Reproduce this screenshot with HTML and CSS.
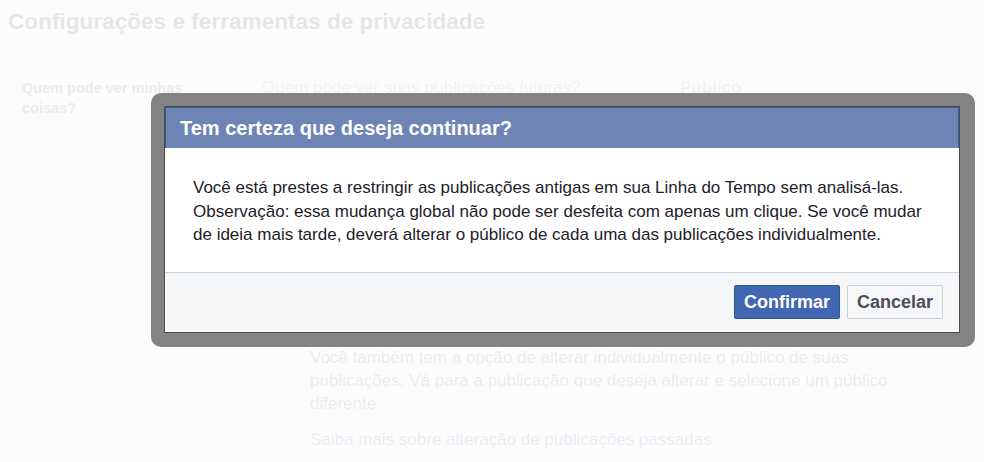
FILE: index.html
```html
<!DOCTYPE html>
<html lang="pt-BR">
<head>
<meta charset="utf-8">
<title>Configurações e ferramentas de privacidade</title>
<link rel="stylesheet" href="styles.css">
</head>
<body>
<div class="page">
  <header class="page-head">
    <h1>Configurações e ferramentas de privacidade</h1>
  </header>
  <section class="settings">
    <div class="side">
      <h2>Quem pode ver minhas coisas?</h2>
    </div>
    <div class="rows">
      <div class="row">
        <div class="q">Quem pode ver suas publicações futuras?</div>
        <div class="val">Público</div>
      </div>
      <div class="row row-open">
        <div class="expanded">
          <p class="note">Você também tem a opção de alterar individualmente o público de suas publicações. Vá para a publicação que deseja alterar e selecione um público diferente.</p>
          <a class="learn" href="#">Saiba mais sobre alteração de publicações passadas</a>
        </div>
      </div>
    </div>
  </section>
</div>

<div class="overlay"></div>

<div class="dialog-frame" role="dialog" aria-labelledby="dlg-title">
  <div class="dialog">
    <div class="dialog-head">
      <h3 id="dlg-title">Tem certeza que deseja continuar?</h3>
    </div>
    <div class="dialog-body">
      Você está prestes a restringir as publicações antigas em sua Linha do Tempo sem analisá-las.<br>
      Observação: essa mudança global não pode ser desfeita com apenas um clique. Se você mudar de ideia mais tarde, deverá alterar o público de cada uma das publicações individualmente.
    </div>
    <div class="dialog-foot">
      <button class="btn btn-primary" type="button">Confirmar</button>
      <button class="btn btn-secondary" type="button">Cancelar</button>
    </div>
  </div>
</div>
</body>
</html>
```

FILE: styles.css
```css
* { box-sizing: border-box; }

html, body {
  margin: 0;
  padding: 0;
}

body {
  background: #ffffff;
  font-family: "Liberation Sans", Arial, Helvetica, sans-serif;
  color: #1d2129;
  overflow: hidden;
}

.page {
  padding-left: 8px;
  min-height: 462px;
}

.page-head {
  height: 63px;
  border-bottom: 1px solid #d3d6db;
}

.page-head h1 {
  margin: 0;
  font-size: 22.6px;
  line-height: 44px;
  font-weight: bold;
  color: #1d2129;
}

.settings {
  display: flex;
  min-height: 399px;
}

.side {
  width: 240px;
  flex: none;
  padding: 15px 14px;
  background: #fcfcfd;
}

.side h2 {
  margin: 0;
  font-size: 14.5px;
  line-height: 20px;
  font-weight: bold;
  color: #4b4f56;
}

.rows {
  flex: 1;
  border-left: 1px solid #eceef1;
}

.row {
  display: flex;
  padding: 15px 0 15px 13px;
  font-size: 17px;
  line-height: 20px;
}

.q {
  width: 418px;
  color: #90949c;
}

.val {
  font-weight: bold;
  color: #90949c;
}

.row-open {
  padding-top: 233px;
  padding-bottom: 0;
}

.expanded {
  padding-left: 48px;
  font-size: 17px;
  line-height: 23px;
  color: #4b4f56;
}

.note {
  margin: 0 0 13px;
  max-width: 600px;
}

.learn {
  color: #365899;
  text-decoration: none;
}

.overlay {
  position: fixed;
  inset: 0;
  background: rgba(252, 252, 252, 0.9);
}

.dialog-frame {
  position: absolute;
  left: 151px;
  top: 93px;
  width: 824px;
  padding: 13px 15px 14px 13px;
  background: #838383;
  border-radius: 10px;
}

.dialog {
  border: 1px solid #4a4a4a;
  background: #ffffff;
}

.dialog-head {
  height: 41px;
  display: flex;
  align-items: center;
  padding: 0 14px;
  background: #6d84b4;
  border: 1px solid #3b5998;
  border-bottom: none;
}

.dialog-head h3 {
  margin: 0;
  color: #ffffff;
  font-size: 20px;
  font-weight: bold;
}

.dialog-body {
  padding: 28px 27px 25px 28px;
  font-size: 17px;
  line-height: 23.5px;
  color: #1d2129;
}

.dialog-foot {
  display: flex;
  justify-content: flex-end;
  gap: 7px;
  padding: 12px 16px 13px;
  background: #f5f6f7;
  border-top: 1px solid #ccd0d5;
}

.btn {
  height: 34px;
  padding: 0 9px;
  border: 1px solid;
  border-radius: 2px;
  font-family: "Liberation Sans", Arial, Helvetica, sans-serif;
  font-size: 18px;
  font-weight: bold;
  line-height: 32px;
  cursor: pointer;
}

.btn-primary {
  background: #4267b2;
  border-color: #365899;
  color: #ffffff;
}

.btn-secondary {
  background: #f6f7f9;
  border-color: #ced0d4;
  color: #4b4f56;
}
```
